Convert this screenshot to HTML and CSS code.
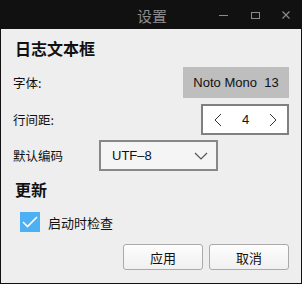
FILE: index.html
```html
<!DOCTYPE html>
<html lang="zh">
<head>
    <meta charset="UTF-8">
    <title>设置</title>
    <link rel="stylesheet" href="styles.css">
</head>
<body>
    <div class="window">
        <div class="titlebar">
            <span class="title">设置</span>
            <div class="controls">
                <span class="ctl min"></span>
                <span class="ctl max"></span>
                <span class="ctl close">
                    <svg width="8" height="8" viewBox="0 0 8 8"><path d="M0.5 0.5L7.5 7.5M7.5 0.5L0.5 7.5" stroke="#8a8a8a" stroke-width="1.2"/></svg>
                </span>
            </div>
        </div>

        <div class="content">
            <h2 class="section">日志文本框</h2>

            <div class="row row-font">
                <span class="label">字体:</span>
                <button class="font-btn">Noto Mono&nbsp; 13</button>
            </div>

            <div class="row row-spin">
                <span class="label">行间距:</span>
                <div class="spin">
                    <span class="arrow">
                        <svg width="8" height="14" viewBox="0 0 8 14"><path d="M7 1L1 7L7 13" fill="none" stroke="#333" stroke-width="1"/></svg>
                    </span>
                    <span class="spin-val">4</span>
                    <span class="arrow">
                        <svg width="8" height="14" viewBox="0 0 8 14"><path d="M1 1L7 7L1 13" fill="none" stroke="#333" stroke-width="1"/></svg>
                    </span>
                </div>
            </div>

            <div class="row row-enc">
                <span class="label">默认编码</span>
                <div class="combo">
                    <span>UTF&#8211;8</span>
                    <svg width="14" height="8" viewBox="0 0 14 8"><path d="M1 1L7 7L13 1" fill="none" stroke="#555" stroke-width="1.2"/></svg>
                </div>
            </div>

            <h2 class="section section-update">更新</h2>

            <label class="check">
                <span class="box">
                    <svg width="16" height="12" viewBox="0 0 16 12"><path d="M1 6L5.5 10.5L15 1" fill="none" stroke="#fff" stroke-width="1.6"/></svg>
                </span>
                <span>启动时检查</span>
            </label>

            <div class="actions">
                <button class="btn">应用</button>
                <button class="btn">取消</button>
            </div>
        </div>
    </div>
</body>
</html>
```

FILE: styles.css
```css
body {
    margin: 0;
    font-family: "Liberation Sans", "Noto Sans CJK SC", sans-serif;
    background: #111;
}

.window {
    width: 300px;
    height: 282px;
    border: 1px solid #111;
    background-color: #eeeeee;
    color: #111;
    display: flex;
    flex-direction: column;
}

.titlebar {
    height: 28px;
    background-color: #111;
    position: relative;
    display: flex;
    align-items: center;
    justify-content: center;
}

.title {
    color: #8c8c8c;
    font-family: "Noto Sans CJK SC", sans-serif;
    font-size: 15px;
    margin-left: 2px;
}

.controls {
    position: absolute;
    right: 0;
    top: 0;
    height: 28px;
    display: flex;
    align-items: center;
}

.ctl {
    width: 32px;
    height: 28px;
    display: flex;
    align-items: center;
    justify-content: center;
}

.ctl.min::before {
    content: "";
    width: 9px;
    height: 1px;
    background: #8a8a8a;
}

.ctl.max::before {
    content: "";
    width: 7px;
    height: 5px;
    border: 1px solid #8a8a8a;
}

.ctl.close {
    width: 30px;
}

.content {
    padding: 0 12px;
    font-size: 13px;
}

.section {
    font-family: "Noto Sans CJK SC", sans-serif;
    font-size: 16px;
    font-weight: bold;
    margin: 8px 0 0 2px;
    line-height: 22px;
}

.row {
    display: flex;
    align-items: center;
    justify-content: space-between;
}

.label {
    font-family: "Noto Sans CJK SC", sans-serif;
    font-size: 12.5px;
}

.row-font {
    margin-top: 8px;
}

.font-btn {
    width: 106px;
    height: 31px;
    border: none;
    background-color: #bebebe;
    font-family: "Liberation Sans", sans-serif;
    font-size: 13px;
    color: #111;
    padding: 0;
}

.row-spin {
    margin-top: 6px;
}

.spin {
    width: 63px;
    height: 27px;
    border: 2px solid #808080;
    background: #fff;
    display: flex;
    align-items: center;
    justify-content: space-between;
    padding: 0 10px 0 11px;
}

.spin-val {
    font-size: 13px;
}

.arrow {
    display: flex;
}

.row-enc {
    justify-content: flex-start;
    margin-top: 5px;
}

.row-enc .label {
    width: 86px;
}

.combo {
    width: 119px;
    height: 31px;
    border: 2px solid #888;
    background-color: #f5f5f5;
    display: flex;
    align-items: center;
    justify-content: space-between;
    padding: 0 8px 0 11px;
    box-sizing: border-box;
    font-size: 13px;
}

.section-update {
    margin-top: 7px;
}

.check {
    display: flex;
    align-items: center;
    gap: 8px;
    margin: 12px 0 0 7px;
    font-family: "Noto Sans CJK SC", sans-serif;
    font-size: 13px;
}

.box {
    width: 20px;
    height: 20px;
    background-color: #4cb0f5;
    display: flex;
    align-items: center;
    justify-content: center;
}

.actions {
    display: flex;
    justify-content: flex-end;
    gap: 6px;
    margin-top: 12px;
}

.btn {
    width: 80px;
    height: 26px;
    border: 1px solid #aaa;
    border-radius: 3px;
    background: linear-gradient(#fdfdfd, #f0f0f0);
    font-family: "Noto Sans CJK SC", sans-serif;
    font-size: 13px;
    color: #111;
    padding: 0;
}
```
